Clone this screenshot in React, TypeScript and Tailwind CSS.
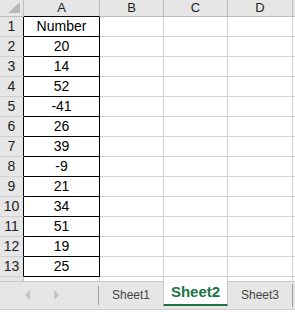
const VALUES = [20, 14, 52, -41, 26, 39, -9, 21, 34, 51, 19, 25];
const COLS = ['B', 'C', 'D'];

const App = () => {
  const rows = [{ n: 1, v: 'Number' }, ...VALUES.map((v, i) => ({ n: i + 2, v: String(v) }))];

  return (
    <div className="w-[295px] h-[312px] overflow-hidden bg-white flex flex-col text-black" style={{ fontFamily: '"Liberation Sans", Arial, sans-serif' }}>
      {/* grid */}
      <div className="grid grid-cols-[24px_76px_64px_64px_65px_1fr] h-[281px] overflow-hidden content-start text-[14px]">
        {/* header row */}
        <div className="h-[17px] bg-[#e6e6e6] border-r border-b border-[#bdbdbd] relative overflow-hidden">
          <div className="absolute right-[3px] bottom-[3px] w-0 h-0 border-l-[12px] border-l-transparent border-b-[11px] border-b-[#b9b9b9]" />
        </div>
        <div className="h-[17px] bg-[#e6e6e6] border-r border-r-[#bdbdbd] border-b border-b-black flex items-center justify-center text-[13px] text-[#222]">A</div>
        {COLS.map((c) => (
          <div key={c} className="h-[17px] bg-[#e6e6e6] border-r border-b border-[#bdbdbd] flex items-center justify-center text-[13px] text-[#222]">{c}</div>
        ))}
        <div className="h-[17px] bg-[#e6e6e6] border-b border-[#bdbdbd]" />

        {[...rows, { n: 14, v: '' }].map((r) => {
          const inTable = r.n <= 13;
          return (
            <div key={r.n} className="contents">
              <div className={`h-[20px] bg-[#e6e6e6] border-b border-b-[#d0d0d0] border-r ${inTable ? 'border-r-black' : 'border-r-[#bdbdbd]'} flex items-center justify-center text-[#222]`}>
                {inTable ? r.n : ''}
              </div>
              <div className={`h-[20px] border-r border-b ${inTable ? 'border-black' : 'border-[#d4d4d4]'} flex items-center justify-center`}>
                {r.v}
              </div>
              {COLS.map((c) => (
                <div key={c} className="h-[20px] border-r border-b border-[#d4d4d4]" />
              ))}
              <div className="h-[20px] border-b border-[#d4d4d4]" />
            </div>
          );
        })}
      </div>

      {/* sheet tabs */}
      <div className="h-[29px] bg-[#e6e6e6] border-t border-[#c6c6c6] border-b border-b-[#cfcfcf] flex items-stretch">
        <div className="w-[98px] flex items-center pl-[25px] gap-[24px] pb-[1px]">
          <div className="w-0 h-0 border-y-[5px] border-y-transparent border-r-[5px] border-r-[#c2c2c2]" />
          <div className="w-0 h-0 border-y-[5px] border-y-transparent border-l-[5px] border-l-[#c2c2c2]" />
        </div>
        <div className="w-[65px] flex items-center justify-center text-[12px] text-[#444] border-l border-[#9e9e9e] my-[4px] pb-[1px]">Sheet1</div>
        <div className="w-[65px] -mt-px mb-[3px] bg-white border-x border-[#c6c6c6] border-b-2 border-b-[#217346] flex items-center justify-center text-[15px] font-bold text-[#217346]">
          Sheet2
        </div>
        <div className="w-[65px] flex items-center justify-center text-[12px] text-[#444] border-r border-[#9e9e9e] my-[2px] pb-[1px]">Sheet3</div>
      </div>
    </div>
  );
};

export default App;
